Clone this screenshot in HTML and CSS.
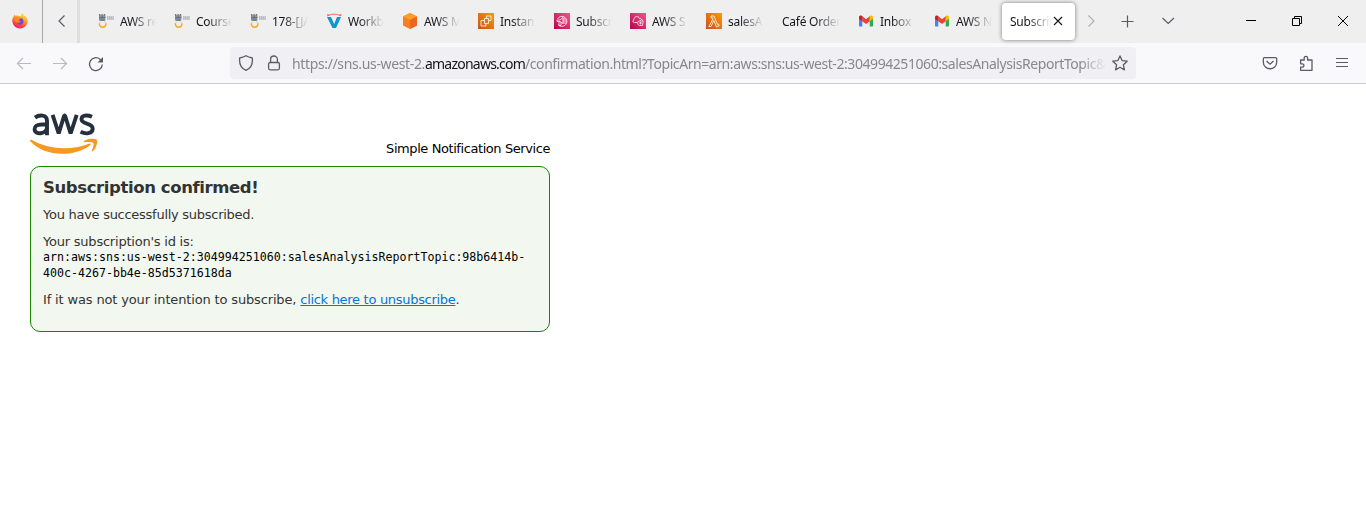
FILE: index.html
```
<!DOCTYPE html>
<html lang="en">
<head>
<meta charset="utf-8">
<title>Subscription confirmed</title>
<link rel="stylesheet" href="styles.css">
</head>
<body>
<svg class="defs" aria-hidden="true">
  <defs>
    <linearGradient id="orange" x1="0" y1="1" x2="1" y2="0"><stop offset="0" stop-color="#c8511b"/><stop offset="1" stop-color="#ff9900"/></linearGradient>
    <linearGradient id="pink" x1="0" y1="1" x2="1" y2="0"><stop offset="0" stop-color="#b0084d"/><stop offset="1" stop-color="#ff4f8b"/></linearGradient>
    <linearGradient id="fire" x1=".8" y1="0" x2=".3" y2="1"><stop offset="0" stop-color="#fff044"/><stop offset=".35" stop-color="#ffb02a"/><stop offset=".65" stop-color="#ff5a36"/><stop offset="1" stop-color="#f0156f"/></linearGradient>
    <symbol id="academy" viewBox="0 0 16 16">
      <path d="M1 1.500h6.500v6H1z" fill="#a4aab0"/><path d="M1.300 1l.7 2.500M4 1v6M6.700 1L6 3.500M1 4.300h6.500M2 4.500v3M6 4.500v3M2.500 7.300h4" stroke="#5b6671" stroke-width=".9"/>
      <path d="M9 3h6.500v4H9z" fill="#cfd2d6"/><path d="M9.500 3v4M11.500 3v4M13.500 3v4M15.500 3v4M9 5h6" stroke="#b0b5bc" stroke-width=".6" fill="none"/>
      <path d="M1.500 9h1.500M6 9h1.500" stroke="#c4c8cc"/><path d="M1.300 10.200c.2 5.300 6.500 5.300 6.700 0" fill="none" stroke="#ffa514" stroke-width="1.500"/>
    </symbol>
    <symbol id="gmail" viewBox="0 0 16 16">
      <path d="M1 4.200v8.300c0 .6.400 1 1 1h2.300V7z" fill="#4285f4"/><path d="M11.700 7v6.500H14c.6 0 1-.4 1-1V4.200z" fill="#34a853"/>
      <path d="M4.300 4.300v4L1 5.800V4.300C1 2.600 2.800 2 4 3z" fill="#c5221f"/><path d="M4 3l4 3.200L12 3l-.3 5.200L8 11 4.300 8.200z" fill="#ea4335"/><path d="M11.700 3.300c1.300-1.300 3.300-.6 3.300 1v1.500l-3.300 2.500z" fill="#fbbc04"/>
    </symbol>
  </defs>
</svg>

<header class="tabbar">
  <div class="pinned">
    <svg class="icon16" viewBox="0 0 16 16"><path d="M10.300 0c1 1 1.600 2 2 2.700 1 .4 1.600.7 2.200 1.800.8 1.200 1.300 2.700 1.200 4.200A7.750 7.750 0 0 1 .3 8.500C.2 6.500.8 4.600 2 3l.2-1.600 1.300 1.300c.8-.3 1.700-.3 2.500 0C7 2.500 8.300 3 9 3.300 8.900 2 9.300.8 10.300 0z" fill="url(#fire)"/><circle cx="8" cy="8.300" r="3.400" fill="#7545dd"/><path d="M2.500 4.200c1.500-.8 3-.5 4 .4 1 .1 2 .3 2.200.8-.2 1-1.700 1-2 1.700 0 .6 1 1.300 2 .9-.6 1.600-2.300 2.200-4 1.500C3 8.700 2 6.500 2.500 4.200z" fill="#ff8a22"/></svg>
  </div>
  <div class="scroll-left"><svg class="icon16" viewBox="0 0 16 16"><path d="M10.500 2.500L5 8l5.500 5.500" fill="none" stroke="#5b5b66" stroke-width="1.200"/></svg></div>
  <nav class="tabs">
    <div class="tab"><svg class="icon16"><use href="#academy"/></svg><span class="label">AWS re</span></div>
    <div class="tab"><svg class="icon16"><use href="#academy"/></svg><span class="label">Course</span></div>
    <div class="tab"><svg class="icon16"><use href="#academy"/></svg><span class="label">178-[JA</span></div>
    <div class="tab"><svg class="icon16" viewBox="0 0 16 16"><path d="M1 4h4l3.200 7L11 4h4l-5 11H6.500z" fill="#1496c8"/><path d="M2 2.500C6 .5 10 .5 14.500 2.500" stroke="#f58460" stroke-width="1.300" fill="none"/><path d="M1 1l.5 2.500L4 2zM15.500 1L15 3.500 12.500 2z" fill="#f26b43"/></svg><span class="label">Workb</span></div>
    <div class="tab"><svg class="icon16" viewBox="0 0 16 16"><path d="M8 0l7 3.500v9L8 16l-7-3.500v-9z" fill="#f58220"/><path d="M8 0l7 3.500L8 7 1 3.500z" fill="#ff9c25"/><path d="M8 7l7-3.500v9L8 16z" fill="#ed6522"/></svg><span class="label">AWS M</span></div>
    <div class="tab"><svg class="icon16" viewBox="0 0 16 16"><path d="M0 0h16v16H0z" fill="url(#orange)"/><path d="M6.500 5.500h4v5h-4zM8.500 5V3H13v4.500h-2M6 7.500H3V13h5v-2" fill="none" stroke="#fff" stroke-width=".8"/></svg><span class="label">Instan</span></div>
    <div class="tab"><svg class="icon16" viewBox="0 0 16 16"><path d="M0 0h16v16H0z" fill="url(#pink)"/><path d="M3.500 6A5 5 0 1 1 4 11.500M3 7h3l3-2.500v6L6 8.500H3zM9 6h3M9 8h3.500M9 10h3M5 8.500v4h2V9" fill="none" stroke="#fff" stroke-width=".8"/></svg><span class="label">Subscr</span></div>
    <div class="tab"><svg class="icon16" viewBox="0 0 16 16"><path d="M0 0h16v16H0z" fill="url(#pink)"/><path d="M7 9.500H4.500C2.500 9.500 2.500 7 4 6.500 4 3 8.500 2.500 9.500 5.500c1-.5 2 0 2 1.500 1.500 0 2 1 1.500 2" fill="none" stroke="#fff" stroke-width=".8"/><path d="M8 8.500l3-1 2 2-.5 3h-3L7.500 11zM9 10h3M10.500 8.500v3" fill="none" stroke="#fff" stroke-width=".7"/></svg><span class="label">AWS S</span></div>
    <div class="tab"><svg class="icon16" viewBox="0 0 16 16"><path d="M0 0h16v16H0z" fill="url(#orange)"/><path d="M5 3h3l3.500 8.500 1-.5.700 1.800L10.500 14 7.800 7.500 5 13.500H2.800L7 6 6.500 4.800H5z" fill="none" stroke="#fff" stroke-width=".8"/></svg><span class="label">salesA</span></div>
    <div class="tab plain"><span class="label">Café Order</span></div>
    <div class="tab"><svg class="icon16"><use href="#gmail"/></svg><span class="label">Inbox</span></div>
    <div class="tab"><svg class="icon16"><use href="#gmail"/></svg><span class="label">AWS N</span></div>
    <div class="tab active"><span class="label">Subscrip</span><svg class="close" viewBox="0 0 10 10"><path d="M1 1l8 8M9 1L1 9" stroke="#15141a" stroke-width="1.100"/></svg></div>
  </nav>
  <div class="tab-tools">
    <svg class="icon16" viewBox="0 0 16 16"><path d="M5.500 2.500L11 8l-5.500 5.500" fill="none" stroke="#b0b0b4" stroke-width="1.200"/></svg>
    <svg class="icon16" viewBox="0 0 16 16"><path d="M8.500 2.500v12M2.500 8.500h12" stroke="#5b5b66" stroke-width="1.200"/></svg>
    <svg class="icon16 all-tabs" viewBox="0 0 16 16"><path d="M2.500 5l5.700 5.500L14 5" fill="none" stroke="#5b5b66" stroke-width="1.200"/></svg>
  </div>
  <div class="window-tools">
    <svg class="icon16" viewBox="0 0 16 16"><path d="M3 7.500h10" stroke="#000"/></svg>
    <svg class="icon16" viewBox="0 0 16 16"><path d="M3.500 5.500h7v7h-7zM5.500 5.500v-2h7v7h-2" fill="none" stroke="#000"/></svg>
    <svg class="icon16" viewBox="0 0 16 16"><path d="M3 3l10 10M13 3L3 13" stroke="#000"/></svg>
  </div>
</header>

<div class="toolbar">
  <div class="nav-tools">
    <svg class="icon16" viewBox="0 0 16 16"><path d="M7 2L1.500 7.500 7 13M1.500 7.500H15" fill="none" stroke="#b9b9be" stroke-width="1.200"/></svg>
    <svg class="icon16" viewBox="0 0 16 16"><path d="M9 2l5.500 5.500L9 13M14.500 7.500H1" fill="none" stroke="#b9b9be" stroke-width="1.200"/></svg>
    <svg class="icon16" viewBox="0 0 16 16"><path d="M14.300 8.500A6.400 6.400 0 1 1 12 3.200l1.500 1.300" fill="none" stroke="#5b5b66" stroke-width="1.300"/><path d="M15 1v5.500H9.500z" fill="#5b5b66"/></svg>
  </div>
  <div class="urlbar">
    <svg class="icon16" viewBox="0 0 16 16"><path d="M8 .7c2 1.200 4 1.800 6.300 2.300.6 5.300-1 10.200-6.300 12.300C2.700 13.200 1.100 8.300 1.700 3 4 2.500 6 1.900 8 .7z" fill="none" stroke="#5b5b66" stroke-width="1.300"/></svg>
    <svg class="icon16 lock" viewBox="0 0 16 16"><rect x="2.600" y="7.500" width="10.800" height="7.300" rx="1.500" fill="none" stroke="#5b5b66" stroke-width="1.300"/><path d="M4.600 7.500v-3C4.600-.2 11.400-.2 11.400 4.500v3" fill="none" stroke="#5b5b66" stroke-width="1.300"/></svg>
    <div class="url"><span class="scheme">https://sns.us-west-2.</span><span class="host">amazonaws.com</span><span class="path">/confirmation.html?TopicArn=arn:aws:sns:us-west-2:304994251060:salesAnalysisReportTopic&amp;</span></div>
    <svg class="icon16 star" viewBox="0 0 16 16"><path d="M8 .9l2.100 4.700 5.100.6-3.800 3.500 1 5.200L8 12.300l-4.400 2.600 1-5.200L.8 6.200l5.100-.6z" fill="none" stroke="#5b5b66" stroke-width="1.300" stroke-linejoin="round"/></svg>
  </div>
  <div class="menu-tools">
    <svg class="icon16" viewBox="0 0 16 16"><path d="M2.500 2.700h11c.8 0 1.200.5 1.200 1.200V7c0 9-13.400 9-13.400 0V3.900c0-.7.500-1.200 1.200-1.200z" fill="none" stroke="#5b5b66" stroke-width="1.300"/><path d="M4.500 6L8 9.200 11.500 6" fill="none" stroke="#5b5b66" stroke-width="1.300"/></svg>
    <svg class="icon16" viewBox="0 0 16 16"><path d="M2.600 7.500V5h3.600V3a1.700 1.700 0 0 1 3.400 0v2H14v10.300H2.600v-3.100h1.600a1.700 1.700 0 0 0 0-3.400H2.600z" fill="none" stroke="#5b5b66" stroke-width="1.300" stroke-linejoin="round"/></svg>
    <svg class="icon16" viewBox="0 0 16 16"><path d="M2 3.500h12M2 7.500h12M2 11.500h12" stroke="#5b5b66" stroke-width="1.200"/></svg>
  </div>
</div>

<main class="page">
  <div class="brand">
    <svg class="aws" viewBox="0 0 68 42" role="img" aria-label="aws"><g fill="none" stroke="#252f3e" stroke-width="3.900"><path d="M5 4.600C9 1.600 17 1.300 17 7.800V22.300M17 11.500H12C6.500 11.500 4.600 13.300 4.600 16.200c0 6.200 12.400 5.300 12.400-2.200"/><path d="M22.600 1.800L28.700 20.500 34.200 2.500h.8L40.600 20.500 46.700 1.800" stroke-linejoin="bevel"/><path d="M62 3.800C57 1.600 51.500 2 51.500 6.300c0 5.500 11.200 3 11.200 9.200 0 5.600-7.300 5.800-12.100 3.300"/></g><path d="M.2 27.200c.5-.8 1-.5 1.700-.1C20 37.200 41 37.500 59 30.700c1.500-.6 2.300.7 1 1.700C42 45 14 43.200.5 28.500c-.4-.4-.6-.8-.3-1.300z" fill="#f7981f"/><path d="M54.200 27.700c3.500-2.500 10.400-2.500 12.400-1.200 1.700 1.500-.5 9-3.500 11.600-1 .8-1.600.3-1.200-.7 1.200-3 2.200-6 1.500-7.200-.8-1.200-4.800-1.300-8.400-1-1.200.1-1.600-.8-.8-1.500z" fill="#f7981f"/></svg>
    <span class="service">Simple Notification Service</span>
  </div>
  <section class="notice">
    <h1>Subscription confirmed!</h1>
    <p class="message">You have successfully subscribed.</p>
    <p class="subscription">Your subscription's id is:<code>arn:aws:sns:us-west-2:304994251060:salesAnalysisReportTopic:98b6414b-<br>400c-4267-bb4e-85d5371618da</code></p>
    <p class="opt-out">If it was not your intention to subscribe, <a href="#">click here to unsubscribe</a>.</p>
  </section>
</main>
</body>
</html>
```
FILE: styles.css
```
* { box-sizing: border-box; }
body { margin: 0; background: #fff; height: 528px; overflow: hidden; font-family: "DejaVu Sans", sans-serif; }
svg { display: block; flex: none; }
.defs { position: absolute; width: 0; height: 0; }
.icon16 { width: 16px; height: 16px; }

.tabbar { display: flex; height: 43px; background: #efefef; font: 12px "Noto Sans", sans-serif; color: #15141a; }
.pinned { width: 43px; padding: 13px 0 0 12px; border-right: 1px solid #a8a8a8; }
.scroll-left { width: 37px; padding: 13px 0 0 11px; border-right: 3px solid #dedede; }
.tabs { display: flex; width: 996px; padding-left: 10px; }
.tab { display: flex; width: 76px; height: 43px; padding: 13px 10px 0 8px; gap: 6px; flex: none; }
.label { flex: 1; min-width: 0; overflow: hidden; white-space: nowrap; line-height: 17px; letter-spacing: -.25px; mask-image: linear-gradient(to right, #000 calc(100% - 25px), transparent); }
.plain { padding-left: 8px; padding-right: 10px; }
.active { width: 73px; height: 37px; margin: 3px 0 0 0; padding: 10px 12px 0 8px; gap: 1px; background: #fff; border-radius: 4px; box-shadow: 0 0 4px rgba(0,0,0,.5); }
.close { width: 10px; height: 10px; margin-top: 3px; }
.tab-tools { display: flex; gap: 20px; width: 160px; padding: 13px 0 0 7px; }
.all-tabs { margin-left: 5px; }
.window-tools { display: flex; gap: 30px; padding: 13px 0 0 7px; }

.toolbar { display: flex; height: 41px; background: #f9f9fb; border-bottom: 1px solid #ccccd0; }
.nav-tools { display: flex; gap: 20px; width: 230px; padding: 13px 0 0 16px; }
.urlbar { display: flex; width: 906px; height: 32px; margin-top: 4px; padding: 8px 8px 0; border-radius: 4px; background: #f0f0f4; }
.lock { margin-left: 12px; }
.url { width: 814px; margin-left: 10px; overflow: hidden; white-space: nowrap; font: 14px/18px "Noto Sans", sans-serif; color: #87878e; mask-image: linear-gradient(to right, #000 calc(100% - 26px), transparent); }
.scheme { letter-spacing: -.36px; }
.host { color: #15141a; letter-spacing: -.77px; }
.path { letter-spacing: -.43px; }
.star { margin-left: 6px; }
.menu-tools { display: flex; gap: 20px; padding: 12px 0 0 126px; }

.page { width: 550px; padding: 29px 0 0 30px; font-size: 13px; }
.brand { display: flex; justify-content: space-between; height: 53px; }
.aws { width: 68px; height: 42px; }
.service { margin-top: 28px; line-height: 16px; color: #000; letter-spacing: -.42px; }
.notice { height: 166px; padding: 11px 12px; border: 1px solid #1d8102; border-radius: 10px; background: #f2f8f0; color: #333; }
h1 { margin: 0 0 9px; font-size: 16.500px; line-height: 20px; letter-spacing: -.4px; white-space: nowrap; }
p { margin: 0 0 11px; line-height: 16px; white-space: nowrap; }
.message { letter-spacing: -.27px; }
.subscription { letter-spacing: -.22px; }
.opt-out { letter-spacing: -.15px; }
code { display: block; font: 11.620px/15.500px "DejaVu Sans Mono", monospace; letter-spacing: 0; color: #000; }
a { color: #0972d3; letter-spacing: -.3px; }
```
